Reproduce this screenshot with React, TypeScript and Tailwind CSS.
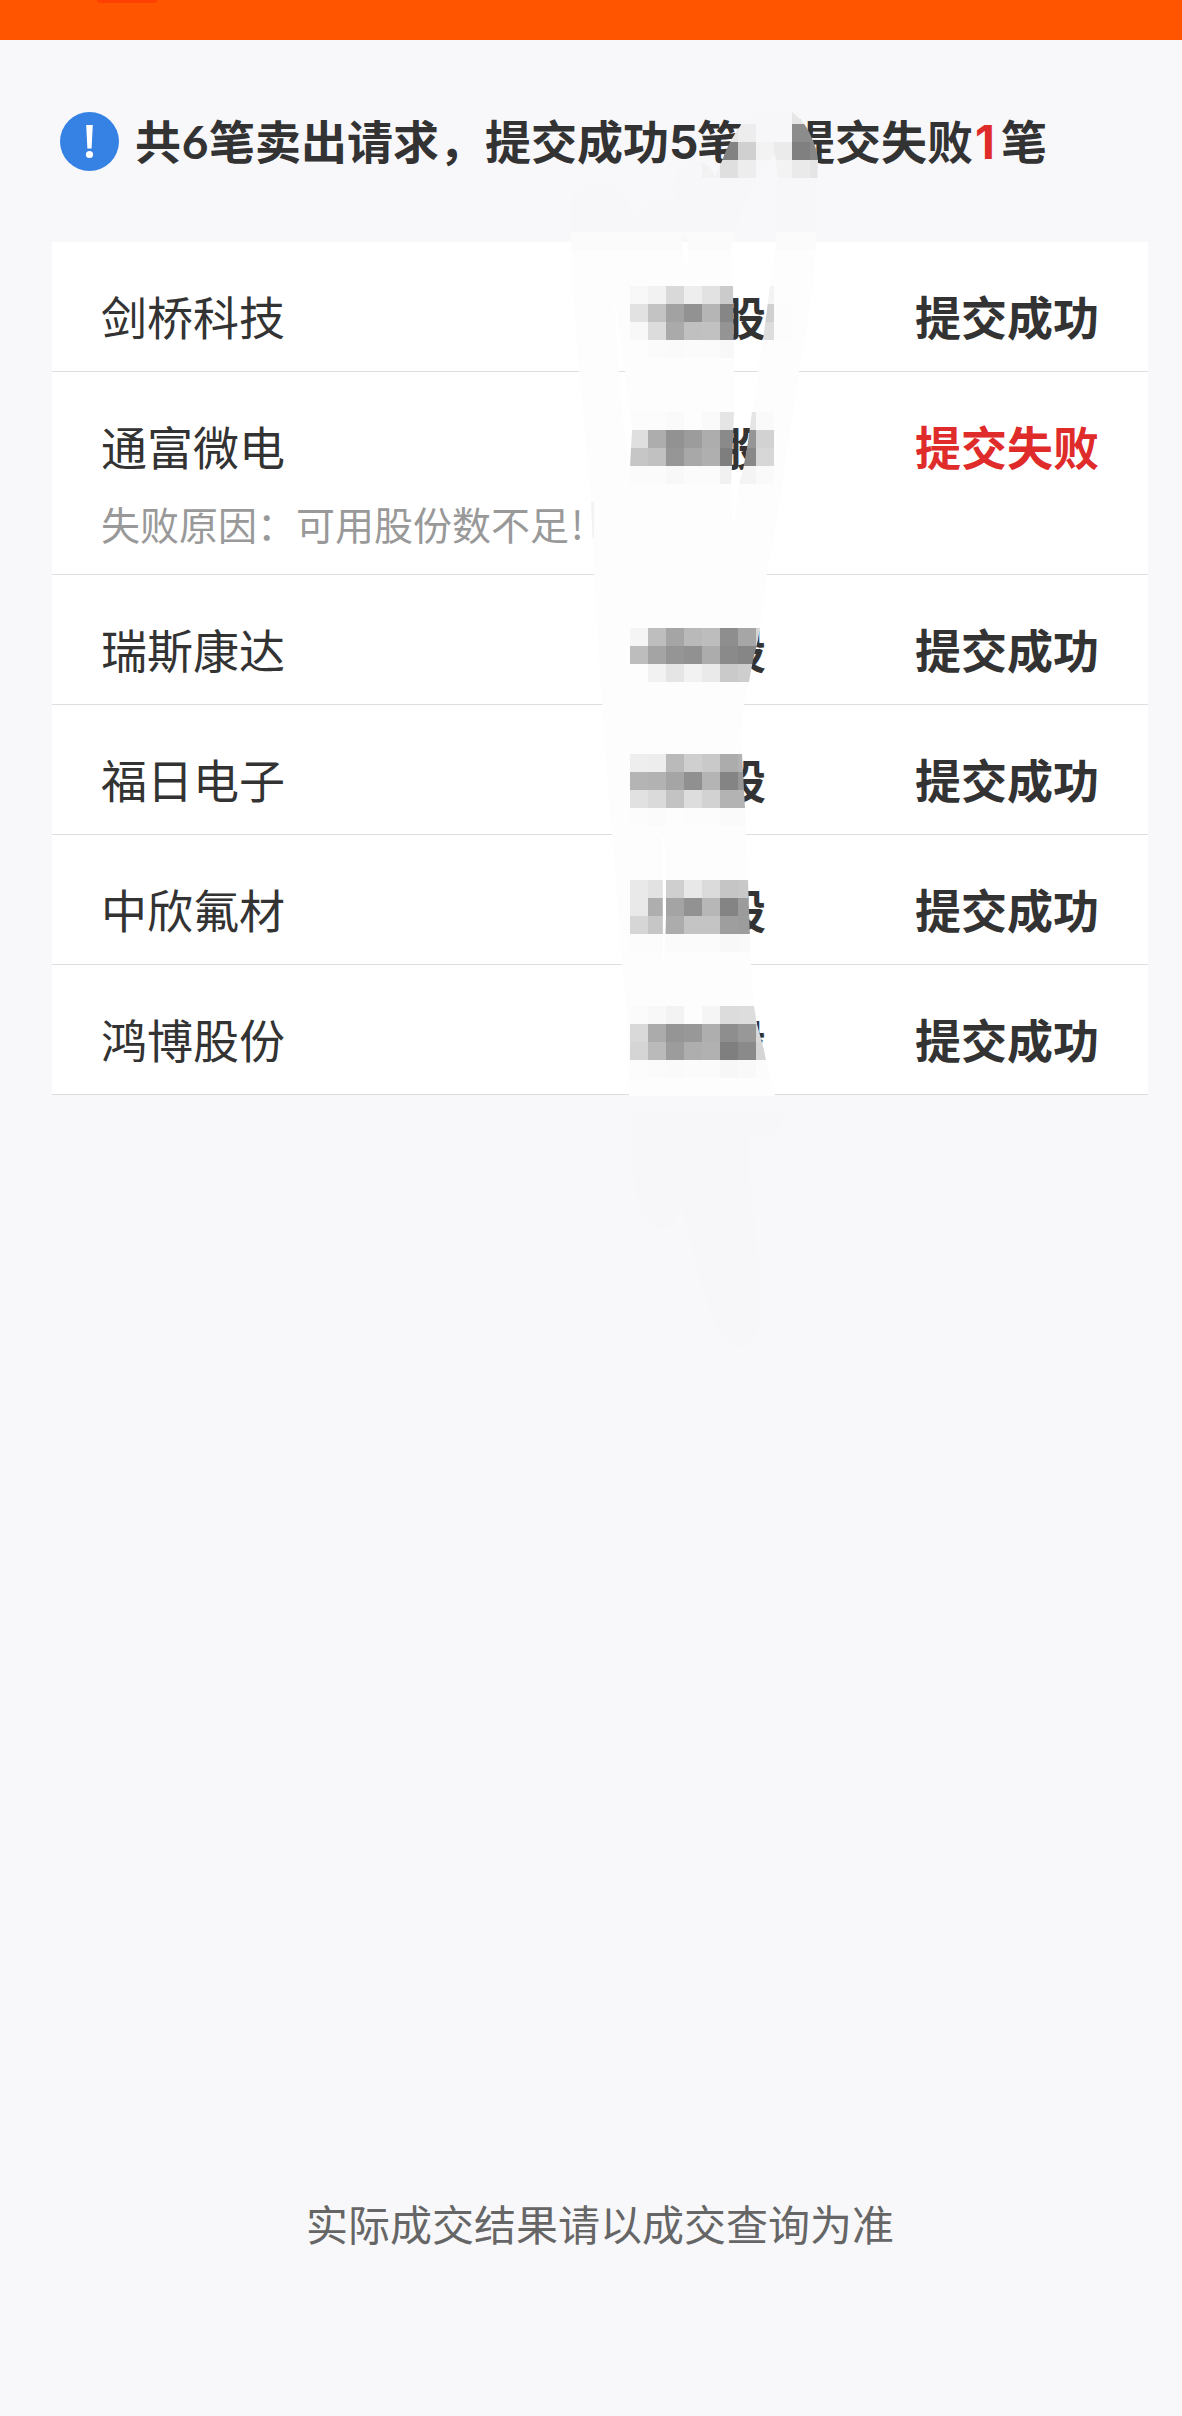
const rows = [
  { name: "剑桥科技", ok: true },
  { name: "通富微电", ok: false, reason: "失败原因：可用股份数不足" },
  { name: "瑞斯康达", ok: true },
  { name: "福日电子", ok: true },
  { name: "中欣氟材", ok: true },
  { name: "鸿博股份", ok: true },
];

const CELL = 18;

// Each line: left x, top y, then the grey level of every following cell.
const mosaic: [number, number, string[]][] = [
  [720, 106, ["f6", "f6", "f6", "f6", "e6", "e6"]],
  [720, 124, ["e6", "ed", "f6", "f6", "8c", "8c"]],
  [702, 142, ["f6", "82", "d0", "f3", "eb", "80", "88"]],
  [702, 160, ["f2", "df", "ed", "f6", "f3", "ea", "e5"]],
  [630, 286, ["f8", "f2", "d9", "ee", "e2", "cb", "fd", "f3", "fd"]],
  [630, 304, ["e2", "c3", "a2", "92", "b5", "86", "fd", "d0", "fc"]],
  [630, 322, ["f8", "dc", "aa", "c0", "c1", "94", "fd", "dd", "fc"]],
  [630, 340, ["fd", "fb", "fa", "fb", "fb", "f8", "fd", "fd", "fd"]],
  [630, 412, ["fc", "fc", "fa", "fd", "fa", "e5", "e5", "fa"]],
  [630, 430, ["df", "ad", "92", "9c", "ad", "8a", "96", "d2"]],
  [630, 448, ["c6", "c1", "96", "a8", "af", "7e", "88", "d7"]],
  [630, 466, ["fb", "fb", "f8", "fb", "fb", "f1", "f4", "fa"]],
  [630, 628, ["f5", "be", "a5", "b9", "bd", "8e", "a6", "d5"]],
  [630, 646, ["bd", "a4", "95", "91", "ac", "8a", "86", "d0"]],
  [630, 664, ["fd", "f2", "e5", "f2", "ea", "ca", "ce", "e5"]],
  [630, 754, ["ee", "ed", "ba", "cf", "c9", "ac", "b2"]],
  [630, 772, ["b4", "b2", "a5", "90", "b4", "84", "98"]],
  [630, 790, ["e1", "da", "c3", "dd", "d2", "b3", "b4"]],
  [630, 808, ["fc", "fb", "fd", "fc", "fc", "fa", "fb"]],
  [630, 880, ["e9", "e2", "cf", "e8", "db", "c5", "c8"]],
  [630, 898, ["e9", "ae", "a4", "92", "b7", "84", "9b"]],
  [630, 916, ["d6", "c6", "ac", "c4", "c4", "9e", "9c"]],
  [630, 934, ["fc", "fc", "fb", "fb", "fb", "f8", "f9"]],
  [630, 1006, ["fb", "f8", "f3", "fd", "f5", "dc", "dd", "fc"]],
  [630, 1024, ["d9", "ab", "95", "98", "ae", "8e", "98", "d9"]],
  [630, 1042, ["d5", "ba", "9c", "ae", "b1", "7f", "8a", "d5"]],
  [630, 1060, ["fc", "fb", "fa", "fb", "fb", "f7", "f9", "fc"]],
];

// "f6" is the page's own tint, slightly blue; every other level is neutral.
const cellFill = (c: string) => (c === "f6" ? "#f7f7f9" : `#${c}${c}${c}`);

function Smudge() {
  return (
    <svg className="pointer-events-none absolute left-0 top-0" width="1182" height="1400" viewBox="0 0 1182 1400">
      <mask id="strokes" maskUnits="userSpaceOnUse" x="0" y="0" width="1182" height="1400">
        <path
          fill="#fff"
          d="M570 205C574 190 584 182 597 182C612 182 624 195 637 215C642 204 650 200 658 200C666 200 674 202 677 205C670 185 674 172 685 165Q704 154 715 176L722 161C728 143 737 130 745 120Q758 110 775 110L792 112Q805 122 810 134Q817 148 818 160L816 242L813 286L805 340L799 371L795 400L790 430L777 520L767 574L760 628L758 640L753 660L749 682L744 704L740 740L742 754L745 808L746 834L748 880L750 940L751 964L753 990L754 1006L757 1024L764 1050L766 1060L775 1095L783 1115Q781 1137 763 1137L748 1133L750 1180L759 1265L759 1325Q755 1347 740 1347Q722 1347 713 1320Q692 1260 682 1204Q678 1229 660 1229Q636 1225 632 1160L629 1094L626 1000L622 964L616 880L612 834L605 750L602 704L597 628L594 574L591 502L582 400L579 371L572 280L571 242Z"
        />
        <g fill="#000">
          <path d="M775 154L757 178L742 210L733 242L731 250L733 286L734 371L734 412L732 466L731 484L733 530L739 485L743 470L748 442L752 412L755 400L758 371L763 340L770 286L776 242L778 178Z" />
          <path d="M677 212L684 232L682 242L684 264L688 262L688 242L683 228Z" />
          <path d="M614 295L619 371L622 412L631 480L630 466L632 430L628 400L625 371Z" />
          <path d="M662.5 832L663 964L664 964L666 916V850Z" />
        </g>
      </mask>
      <g mask="url(#strokes)" shapeRendering="crispEdges">
        <rect x="560" y="100" width="270" height="132" fill="#f7f7f9" />
        <rect x="560" y="232" width="270" height="18" fill="#fbfbfb" />
        <rect x="560" y="250" width="270" height="846" fill="#fdfdfd" />
        <rect x="560" y="1096" width="270" height="18" fill="#f8f8fa" />
        <rect x="560" y="1114" width="270" height="240" fill="#f7f7f9" />
        {mosaic.map(([x, y, cells]) =>
          cells.map((c, i) => (
            <rect key={`${x + i * CELL}-${y}`} x={x + i * CELL} y={y} width={CELL} height={CELL} fill={cellFill(c)} />
          )),
        )}
        <rect x="590" y="502" width="4" height="36" fill="#f2f2f2" />
      </g>
    </svg>
  );
}

export default function App() {
  return (
    <main className="relative flex h-[2416px] w-[1182px] flex-col overflow-hidden bg-[#f8f8fb] text-[#333] [font-family:'Noto_Sans_CJK_SC',sans-serif]">
      <header className="h-10 shrink-0 bg-[#ff5500]">
        <div className="ml-[97px] h-[3px] w-[60px] rounded-b-full bg-[#ff4000]" />
      </header>

      <div className="mt-[72px] flex h-[59px] shrink-0 items-center pl-[60px]">
        <svg className="mr-4 shrink-0" width="59" height="59" viewBox="0 0 59 59">
          <circle cx="29.5" cy="29.5" r="29.5" fill="#3682e4" />
          <path d="M26.2 13h6.6l-1.2 23.5h-4.2z" fill="#fff" />
          <circle cx="29.5" cy="42.5" r="3.6" fill="#fff" />
        </svg>
        <h1 className="flex h-[59px] whitespace-nowrap text-[46px] font-bold leading-[54px]">
          <span>共</span>
          <span className="w-[28px] pt-[3px] text-center [font-family:Lato,sans-serif]">6</span>
          <span>笔卖出请求，提交成功</span>
          <span className="w-[28px] pt-[3px] text-center [font-family:Inter,sans-serif]">5</span>
          <span>笔，提交失败</span>
          <span className="w-[28px] pr-1 pt-[3px] text-center text-[#e02b2b] [font-family:Inter,sans-serif]">1</span>
          <span>笔</span>
        </h1>
      </div>

      <section className="ml-[52px] mt-[71px] w-[1096px] shrink-0 bg-white">
        {rows.map((r) => (
          <div key={r.name} className="border-b border-[#dedede] pl-[49px] pr-[49px]">
            <div className="flex h-[129px] items-center pt-4 text-[46px] leading-none">
              <span className="w-[619px]">{r.name}</span>
              <span className="font-bold">股</span>
              <span className={r.ok ? "ml-auto font-bold" : "ml-auto font-bold text-[#e02b2b]"}>
                {r.ok ? "提交成功" : "提交失败"}
              </span>
            </div>
            {r.reason && (
              <p className="h-[73px] text-[39px] leading-[44px] text-[#999]">
                {r.reason}
                <span className="ml-0.5">!</span>
              </p>
            )}
          </div>
        ))}
      </section>

      <p className="ml-[52px] mt-[1098px] w-[1096px] text-center text-[42px] leading-[60px] text-[#666]">
        实际成交结果请以成交查询为准
      </p>

      <Smudge />
    </main>
  );
}
